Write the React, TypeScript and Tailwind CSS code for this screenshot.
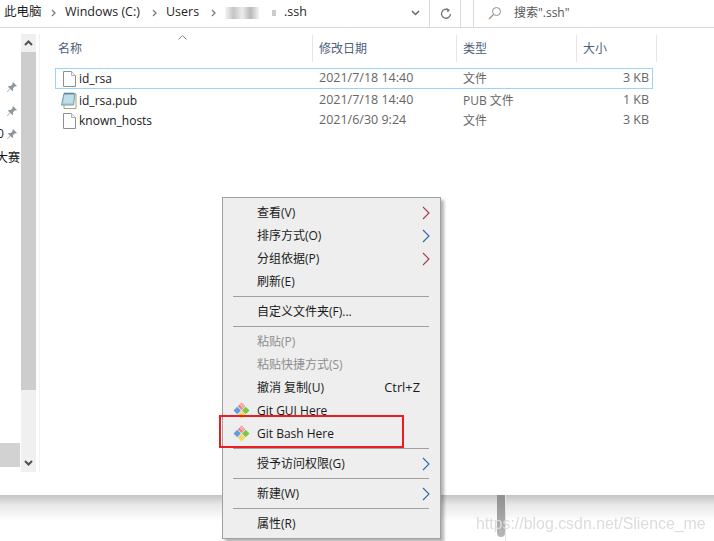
import React from "react";

const ui = { fontFamily: '"Open Sans","Noto Sans CJK SC",sans-serif' };

function Pin() {
  return (
    <svg width="12" height="12" viewBox="0 0 12 12" className="block">
      <path d="M7 1l4 4-1 .6-1-.3-2 2 .2 2-.8.7-2-2L1.500 11 1 10.500l3-2.800-2-2 .7-.8 2 .2 2-2-.3-1z" fill="#8f979e" />
    </svg>
  );
}

function FileIcon() {
  return (
    <svg width="13" height="16" viewBox="0 0 13 16" className="block">
      <path d="M.5.5h8l4 4v11H.5z" fill="#fdfdfd" stroke="#8a8f94" />
      <path d="M8.500.5v4h4" fill="#f2f2f2" stroke="#b0b4b8" />
    </svg>
  );
}

function PubIcon() {
  return (
    <svg width="16" height="17" viewBox="0 0 16 17" className="block">
      <path d="M3 2h12v14.500H3z" fill="#fff" stroke="#b89c6c" />
      <path d="M3 1.500h11L12.500 13H.5z" fill="#a8d0de" stroke="#6e9fb0" />
      <path d="M3.500 4h9M3 6h9.500M2.800 8h9.400M2.500 10h9.500" stroke="#d8edf3" />
      <path d="M4 .5v2M6 .5v2M8 .5v2M10 .5v2M12 .5v2" stroke="#55707c" />
    </svg>
  );
}

function GitIcon() {
  return (
    <svg width="17" height="17" viewBox="0 0 17 17" className="block">
      <path d="M.5 8.500l3.700-3.700 3.700 3.700-3.700 3.700z" fill="#5c9ee0" />
      <path d="M4.800 4.200L8.500.5l3.700 3.700-3.700 3.700z" fill="#f08080" />
      <path d="M6.500 2.200l3.700 3.700M8 1.500l3 3" stroke="#fff" strokeWidth="0.800" />
      <path d="M9 8.500l3.700-3.700 3.800 3.700-3.800 3.700z" fill="#7ac943" />
      <path d="M4.800 12.800L8.500 9.100l3.700 3.700-3.700 3.700z" fill="#f5d75e" />
    </svg>
  );
}

function Chevron({ color }: { color: string }) {
  return (
    <svg width="8" height="14" viewBox="0 0 8 14" className="block">
      <path d="M1 1l6 6-6 6" fill="none" stroke={color} strokeWidth="1.100" />
    </svg>
  );
}

function Crumb() {
  return (
    <svg width="5" height="8" viewBox="0 0 5 8" className="block">
      <path d="M1 1l3 3-3 3" fill="none" stroke="#7a7a7a" strokeWidth="1.300" />
    </svg>
  );
}

const columnGrid = "grid grid-cols-[257px_144px_120px_81px]";

const files = [
  { name: "id_rsa", date: "2021/7/18 14:40", type: "文件", size: "3 KB", icon: <FileIcon />, rowClass: "mb-[1px] w-[598px] border border-[#99d1ff]" },
  { name: "id_rsa.pub", date: "2021/7/18 14:40", type: "PUB 文件", size: "1 KB", icon: <PubIcon />, rowClass: "border border-transparent" },
  { name: "known_hosts", date: "2021/6/30 9:24", type: "文件", size: "3 KB", icon: <FileIcon />, rowClass: "-mt-[1px] border border-transparent" },
];

function MenuItem({
  label,
  shortcut,
  disabled,
  arrow,
  icon,
}: {
  label: string;
  shortcut?: string;
  disabled?: boolean;
  arrow?: string;
  icon?: React.ReactNode;
}) {
  return (
    <div className={`flex h-[23px] items-center pr-[10px] pl-[10px] text-[12px] ${disabled ? "text-[#8d8d8d]" : "text-[#1a1a1a]"}`}>
      <div className="flex w-[24px] shrink-0 items-center">{icon}</div>
      <span className="flex-1 whitespace-nowrap">{label}</span>
      {shortcut && <span className="mr-[10px] text-[12.800px]">{shortcut}</span>}
      {arrow && <Chevron color={arrow} />}
    </div>
  );
}

function Separator() {
  return <div className="mx-[10px] my-[3px] h-px w-[196px] bg-[#a0a0a0]" />;
}

export default function App() {
  return (
    <div style={ui} className="relative h-[541px] w-[714px] overflow-hidden bg-white">
      <header className="flex h-[28px] border-b border-[#d9d9d9] text-[12.500px] text-[#1f1f1f]">
        <div className="flex w-[429px] items-center pb-[2px] pl-[4px]">
          <span className="w-[47px]">此电脑</span>
          <span className="w-[14px]"><Crumb /></span>
          <span className="w-[87px] whitespace-nowrap">Windows (C:)</span>
          <span className="w-[14px]"><Crumb /></span>
          <span className="w-[45px]">Users</span>
          <span className="w-[14px]"><Crumb /></span>
          <span className="flex h-[12px] w-[59px] items-center">
            <span className="h-[12px] w-[34px] bg-[linear-gradient(90deg,#f6f6f6,#c4c4c4,#ececec,#b8b8b8,#f4f4f4)]" />
            <span className="ml-[13px] h-[6px] w-[4px] bg-[#cccccc]" />
          </span>
          <span>.ssh</span>
          <svg width="9" height="6" viewBox="0 0 9 6" className="mr-[9px] ml-auto block">
            <path d="M1 1l3.500 3.500L8 1" fill="none" stroke="#666" strokeWidth="1.500" />
          </svg>
        </div>
        <div className="flex w-[32px] items-center justify-center border-x border-[#d9d9d9] pb-[1px] pl-[2px]">
          <svg width="12" height="13" viewBox="0 0 12 13" className="block">
            <path d="M8.500 3A4.500 4.500 0 1 0 10.500 7" fill="none" stroke="#777" strokeWidth="1.300" />
            <path d="M6.500 1l3.500 2-2.500 2.500z" fill="#777" />
          </svg>
        </div>
        <div className="ml-[12px] flex flex-1 items-center border-l border-[#d9d9d9] pb-[2px] pl-[14px] text-[#555]">
          <svg width="14" height="14" viewBox="0 0 14 14" className="block">
            <circle cx="8.500" cy="5.500" r="4" fill="none" stroke="#8d8d8d" />
            <path d="M5.500 8.500L1 13" stroke="#b98a6a" strokeWidth="1.200" />
          </svg>
          <span className="ml-[12px] text-[12px]">搜索".ssh"</span>
        </div>
      </header>

      <main className="flex h-[467px] bg-white">
        <nav className="w-[21px] overflow-hidden pt-[53px]">
          <div className="flex flex-col items-end gap-[12px] pr-[3px]">
            <Pin />
            <Pin />
            <div className="-mt-[1px] flex h-[12px] w-full items-center justify-between text-[12px] text-[#222]">
              <span className="-ml-[3px]">0</span>
              <Pin />
            </div>
          </div>
          <div className="mt-[10px] -ml-[4px] h-[16px] w-[25px] text-[12px] leading-[16px] whitespace-nowrap text-[#111]">大赛</div>
          <div className="mt-[277px] h-[24px] w-[20px] bg-[#d2d2d2]" />
        </nav>
        <div className="mt-[6px] flex h-[438px] w-[15px] flex-col bg-[#f0f0f0]">
          <div className="flex h-[18px] items-center justify-center">
            <svg width="9" height="6" viewBox="0 0 9 6" className="block">
              <path d="M1 5l3.500-3.500L8 5" fill="none" stroke="#505050" strokeWidth="2" />
            </svg>
          </div>
          <div className="h-[338px] bg-[#cdcdcd]" />
          <div className="mt-auto flex h-[18px] items-center justify-center">
            <svg width="9" height="6" viewBox="0 0 9 6" className="block">
              <path d="M1 1l3.500 3.500L8 1" fill="none" stroke="#505050" strokeWidth="2" />
            </svg>
          </div>
        </div>
        <div className="mt-[6px] ml-[3px] h-[438px] w-px bg-[#f2f2f2]" />
        <section className="min-w-0 flex-1 pl-[15px] text-[12px]">
          <div className={`${columnGrid} relative h-[40px] pt-[7px] text-[#4c607a]`}>
            <div className="relative pt-[5px] pl-[3px]">
              名称
              <svg width="9" height="5" viewBox="0 0 9 5" className="absolute top-0 left-[123px] block">
                <path d="M.500 4.500l4-4 4 4" fill="none" stroke="#8a8a8a" />
              </svg>
            </div>
            <div className="h-[27px] border-l border-[#e5e5e5] pt-[5px] pl-[6px]">修改日期</div>
            <div className="h-[27px] border-l border-[#e5e5e5] pt-[5px] pl-[6px]">类型</div>
            <div className="h-[27px] border-x border-[#e5e5e5] pt-[5px] pl-[6px]">大小</div>
          </div>
          <div className="w-[600px]">
            {files.map((f) => (
              <div key={f.name} className={`${columnGrid} h-[21px] items-center ${f.rowClass}`}>
                <div className="flex items-center text-[#1a1a1a]">
                  <span className="flex w-[23px] justify-center pl-[3px]">{f.icon}</span>
                  <span>{f.name}</span>
                </div>
                <div className="pl-[6px] text-[12.500px] text-[#666]">{f.date}</div>
                <div className="pl-[6px] text-[#666]">{f.type}</div>
                <div className="w-[72px] text-right text-[12.500px] text-[#666]">{f.size}</div>
              </div>
            ))}
          </div>
        </section>
      </main>

      <footer className="h-[46px] bg-[linear-gradient(180deg,#c4c4c4_0px,#e8e8e8_10px,#ffffff_26px)]" />

      <div className="absolute top-[495px] left-[505px] h-[46px] w-px bg-[#e4e4e4]" />
      <div className="absolute top-[495px] left-[497px] h-[42px] w-[8px] rounded-b-full bg-[linear-gradient(180deg,#909090,#b8b8b8)]" />
      <div className="absolute top-[512px] left-[476px] text-[15.900px] whitespace-nowrap text-[#dcdcdc] blur-[0.4px] [font-family:'Liberation_Sans',sans-serif]">
        https://blog.csdn.net/Slience_me
      </div>

      <div className="absolute top-[197px] left-[222px] w-[219px] border border-[#a0a0a0] bg-[#eeeeee] py-[3px] shadow-[3px_3px_3px_rgba(0,0,0,0.3)]">
        <MenuItem label="查看(V)" arrow="#a33a4a" />
        <MenuItem label="排序方式(O)" arrow="#2a6aa8" />
        <MenuItem label="分组依据(P)" arrow="#a33a4a" />
        <MenuItem label="刷新(E)" />
        <Separator />
        <MenuItem label="自定义文件夹(F)..." />
        <Separator />
        <MenuItem label="粘贴(P)" disabled />
        <MenuItem label="粘贴快捷方式(S)" disabled />
        <MenuItem label="撤消 复制(U)" shortcut="Ctrl+Z" />
        <MenuItem label="Git GUI Here" icon={<GitIcon />} />
        <MenuItem label="Git Bash Here" icon={<GitIcon />} />
        <Separator />
        <MenuItem label="授予访问权限(G)" arrow="#2a6aa8" />
        <Separator />
        <MenuItem label="新建(W)" arrow="#2a6aa8" />
        <Separator />
        <MenuItem label="属性(R)" />
      </div>

      <div className="absolute top-[415px] left-[219px] h-[33px] w-[185px] border-[2px] border-[#ed1c24]" />
    </div>
  );
}
